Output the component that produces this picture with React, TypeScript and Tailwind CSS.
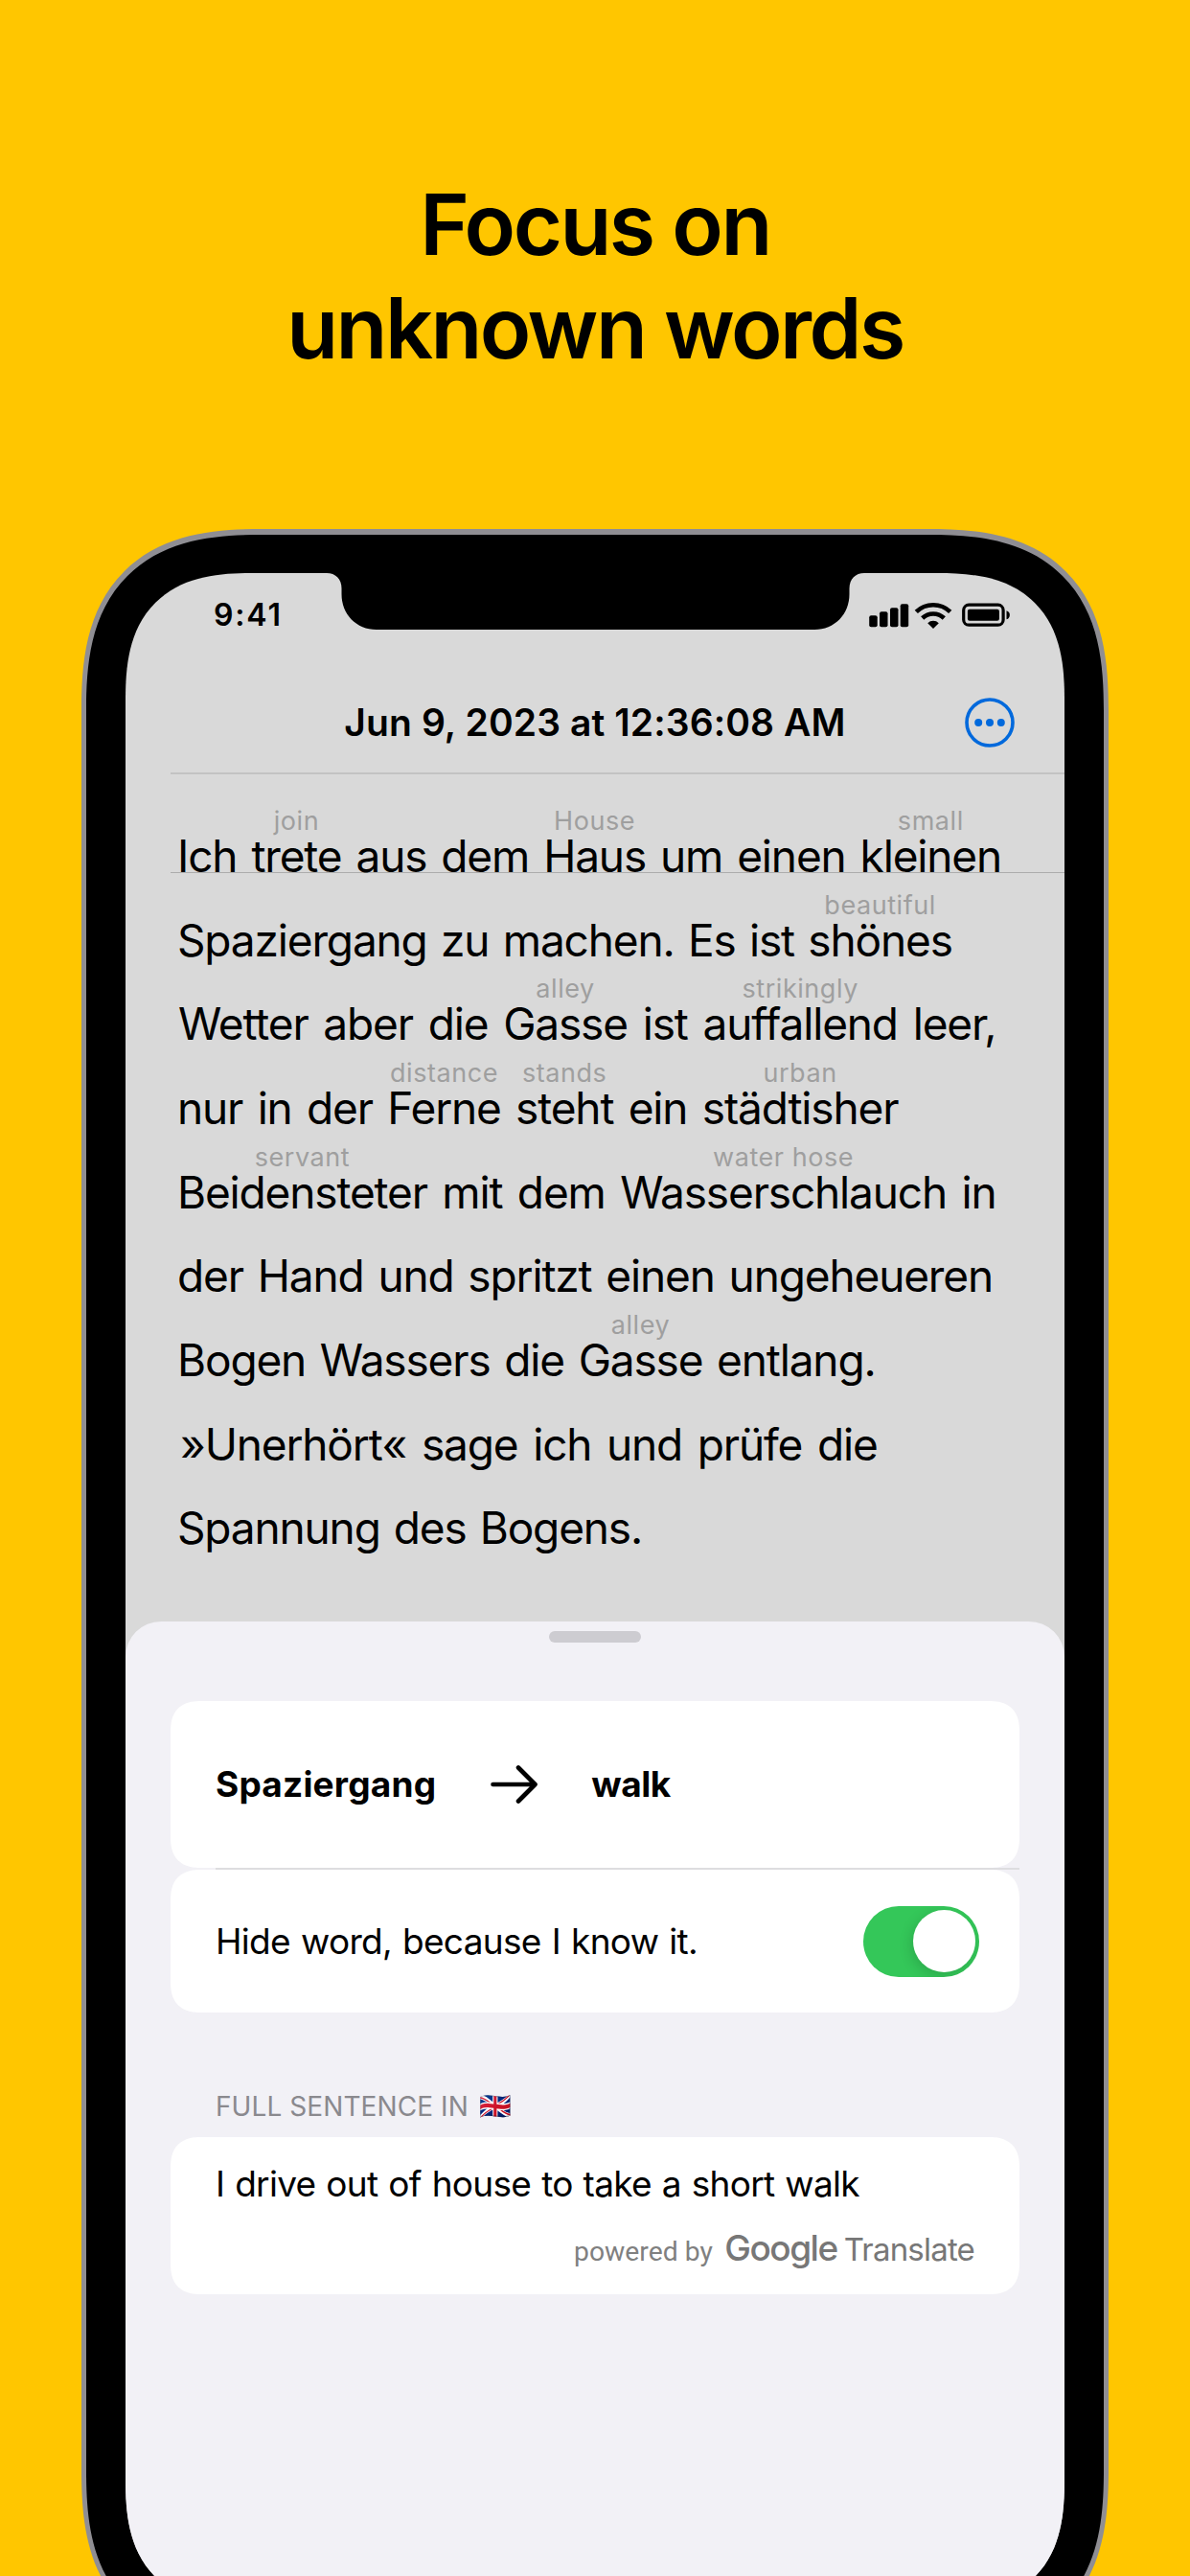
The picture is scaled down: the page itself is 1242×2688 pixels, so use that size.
import React from "react";

type Token = string | [word: string, hint: string];

type Line = { tokens: Token[]; spacing: string };

const lines: Line[] = [
  { tokens: ["Ich ", ["trete", "join"], " aus dem ", ["Haus", "House"], " um einen ", ["kleinen", "small"]], spacing: "[word-spacing:3.2px]" },
  { tokens: ["Spaziergang zu machen. Es ist ", ["shönes", "beautiful"]], spacing: "[word-spacing:2.6px]" },
  { tokens: ["Wetter aber die ", ["Gasse", "alley"], " ist ", ["auffallend", "strikingly"], " leer,"], spacing: "pl-[1px] [word-spacing:4px]" },
  { tokens: ["nur in der ", ["Ferne", "distance"], " ", ["steht", "stands"], " ein ", ["städtisher", "urban"]], spacing: "[word-spacing:3.6px]" },
  { tokens: [["Beidensteter", "servant"], " mit dem ", ["Wasserschlauch", "water hose"], " in"], spacing: "[word-spacing:3.7px]" },
  { tokens: ["der Hand und spritzt einen ungeheueren"], spacing: "[word-spacing:3.1px]" },
  { tokens: ["Bogen Wassers die ", ["Gasse", "alley"], " entlang."], spacing: "[word-spacing:2.9px]" },
  { tokens: ["»Unerhört« sage ich und prüfe die"], spacing: "pl-[3px] [word-spacing:3.9px]" },
  { tokens: ["Spannung des Bogens."], spacing: "[word-spacing:2.3px]" },
];

function Annotated({ word, hint }: { word: string; hint: string }) {
  return (
    <span className="relative">
      {word}
      <span className="absolute left-1/2 bottom-full -mb-[9px] -translate-x-1/2 text-[27px] leading-[34px] tracking-[0.55px] [word-spacing:0px] text-[#9f9f9f]">
        {hint}
      </span>
    </span>
  );
}

function Notch() {
  return (
    <svg className="absolute left-[210px] top-0 h-[59px] w-[561px]" viewBox="0 0 561 59" fill="black">
      <path d="M0 -1V0C9 0 15.5 6 15.5 16V22C15.5 43 31 59 52 59H509C530 59 545.500 43 545.500 22V16C545.500 6 552 0 561 0V-1Z" />
    </svg>
  );
}

function StatusIcons() {
  return (
    <svg className="h-[30px] w-[150px]" viewBox="905.500 627 150 30" fill="black">
      <rect x="906.700" y="642.300" width="8.500" height="11.900" rx="2" />
      <rect x="917.500" y="638.300" width="8.500" height="15.900" rx="2" />
      <rect x="928.500" y="634.300" width="8.500" height="19.900" rx="2" />
      <rect x="939.200" y="630.300" width="8.500" height="23.900" rx="2" />
      <g fill="none" stroke="black" strokeWidth="4.700">
        <path d="M955.800 638.400A25.500 25.500 0 0 1 991.200 638.400" />
        <path d="M962.200 645A16.500 16.500 0 0 1 984.800 645" />
      </g>
      <path d="M973.500 656L967.700 650.200A8.300 8.300 0 0 1 979.300 650.200Z" />
      <rect x="1005.200" y="631.200" width="41.400" height="21" rx="5.500" fill="none" stroke="black" strokeWidth="3.200" />
      <rect x="1009.400" y="635.700" width="33" height="12" rx="2" />
      <path d="M1050 637.200C1054.500 638.500 1054.500 645 1050 646.300Z" />
    </svg>
  );
}

function MoreIcon() {
  return (
    <svg className="h-[52px] w-[52px]" viewBox="0 0 52 52">
      <circle cx="26" cy="26" r="24" fill="none" stroke="#0069dc" strokeWidth="3.600" />
      <g fill="#0069dc">
        <circle cx="14.200" cy="26" r="4" />
        <circle cx="26" cy="26" r="4" />
        <circle cx="37.800" cy="26" r="4" />
      </g>
    </svg>
  );
}

function ArrowIcon() {
  return (
    <svg className="ml-[56px] h-[44px] w-[50px]" viewBox="0 0 50 44" fill="none" stroke="black" strokeWidth="4.600" strokeLinecap="round" strokeLinejoin="round">
      <path d="M3.500 22H47.500M30 4.500L47.500 22L30 39.500" />
    </svg>
  );
}

function Sheet() {
  return (
    <section className="mt-[53px] flex-1 rounded-t-[37px] bg-[#f2f1f6] px-[47px] pt-[10px]">
      <div className="mx-auto h-[12px] w-[96px] rounded-full bg-[#cdccd1]" />

      <div className="mt-[61px] flex h-[174px] items-center rounded-[32px] bg-white pl-[47px] text-[37px] font-bold [corner-shape:superellipse(1.3)]">
        <span className="tracking-[0.2px]">Spaziergang</span>
        <ArrowIcon />
        <span className="ml-[56px] tracking-[-0.5px]">walk</span>
      </div>
      <div className="ml-[47px] h-[2px] bg-[#dddde0]" />
      <div className="flex h-[149px] items-center justify-between rounded-[32px] bg-white pl-[47px] pr-[42px] [corner-shape:superellipse(1.3)]">
        <span className="text-[37px] tracking-[-0.7px] [word-spacing:1.4px]">Hide word, because I know it.</span>
        <span className="flex h-[74px] w-[121px] items-center justify-end overflow-hidden rounded-full bg-[#34c759] pr-[4.500px]">
          <span className="size-[65px] rounded-full bg-white shadow-[-2px_4px_14px_rgba(0,0,0,0.15)]" />
        </span>
      </div>

      <h2 className="mt-[80px] flex h-[50px] items-start pl-[47px] text-[28px] leading-[36px] tracking-[0.08px] text-[#8a898e]">
        FULL SENTENCE IN
        <span className="ml-[12px] text-[27px] font-['Noto_Color_Emoji',sans-serif]">🇬🇧</span>
      </h2>
      <div className="flex h-[164px] flex-col rounded-[32px] bg-white pl-[47px] pt-[27px] [corner-shape:superellipse(1.3)]">
        <p className="text-[37px] leading-[44px] tracking-[-0.7px] [word-spacing:1.2px]">I drive out of house to take a short walk</p>
        <p className="mr-[47px] mt-[22px] flex items-baseline justify-end leading-[46px] text-[#777777]">
          <span className="font-['Roboto',sans-serif] text-[28.300px] text-[#808080]">powered by</span>
          <span className="ml-[12.500px] text-[37px] font-medium tracking-[-1.5px]">Google</span>
          <span className="ml-[7px] text-[33px] tracking-[-0.8px]">Translate</span>
        </p>
      </div>
    </section>
  );
}

export default function App() {
  return (
    <main className="h-[2688px] w-[1242px] overflow-hidden bg-[#ffc600] pt-[180px] font-['Inter',sans-serif] text-black">
      <h1 className="text-center text-[88px] font-semibold leading-[108px] tracking-[-2.5px]">
        Focus on
        <br />
        unknown words
      </h1>

      <div className="ml-[85px] mt-[156px] h-[2214px] w-[1072px] rounded-[190px] bg-[#8f8e93] px-[5px] pb-[5px] pt-[5.500px] [corner-shape:superellipse(1.38)]">
        <div className="h-full rounded-[184px] bg-black px-[41px] pb-[41px] pt-[40.500px] [corner-shape:superellipse(1.38)]">
          <div className="relative flex h-full flex-col overflow-hidden rounded-[133px] bg-[#d9d9d9] [corner-shape:superellipse(1.38)]">
            <Notch />
            <div className="flex h-[104px] items-start justify-between pl-[92px] pr-[55px] pt-[29px]">
              <span className="text-[32px] font-semibold leading-[29px] tracking-[1.84px]">9:41</span>
              <StatusIcons />
            </div>
            <header className="relative flex h-[104px] items-center justify-center">
              <h2 className="text-[39px] font-semibold tracking-[0.1px]">Jun 9, 2023 at 12:36:08 AM</h2>
              <button className="absolute right-[52px] top-[26px]">
                <MoreIcon />
              </button>
            </header>
            <hr className="ml-[47px] h-[2px] border-0 bg-[#c3c3c3]" />

            <article className="relative mt-[42px] pl-[54px] text-[46px] leading-[87.670px] tracking-[-1.15px]">
              <div className="absolute left-[47px] right-0 top-[60px] h-px bg-[#adadad]" />
              {lines.map((line, i) => (
                <p key={i} className={`relative whitespace-pre ${line.spacing}`}>
                  {line.tokens.map((t, j) =>
                    typeof t === "string" ? t : <Annotated key={j} word={t[0]} hint={t[1]} />
                  )}
                </p>
              ))}
            </article>

            <Sheet />
          </div>
        </div>
      </div>
    </main>
  );
}
